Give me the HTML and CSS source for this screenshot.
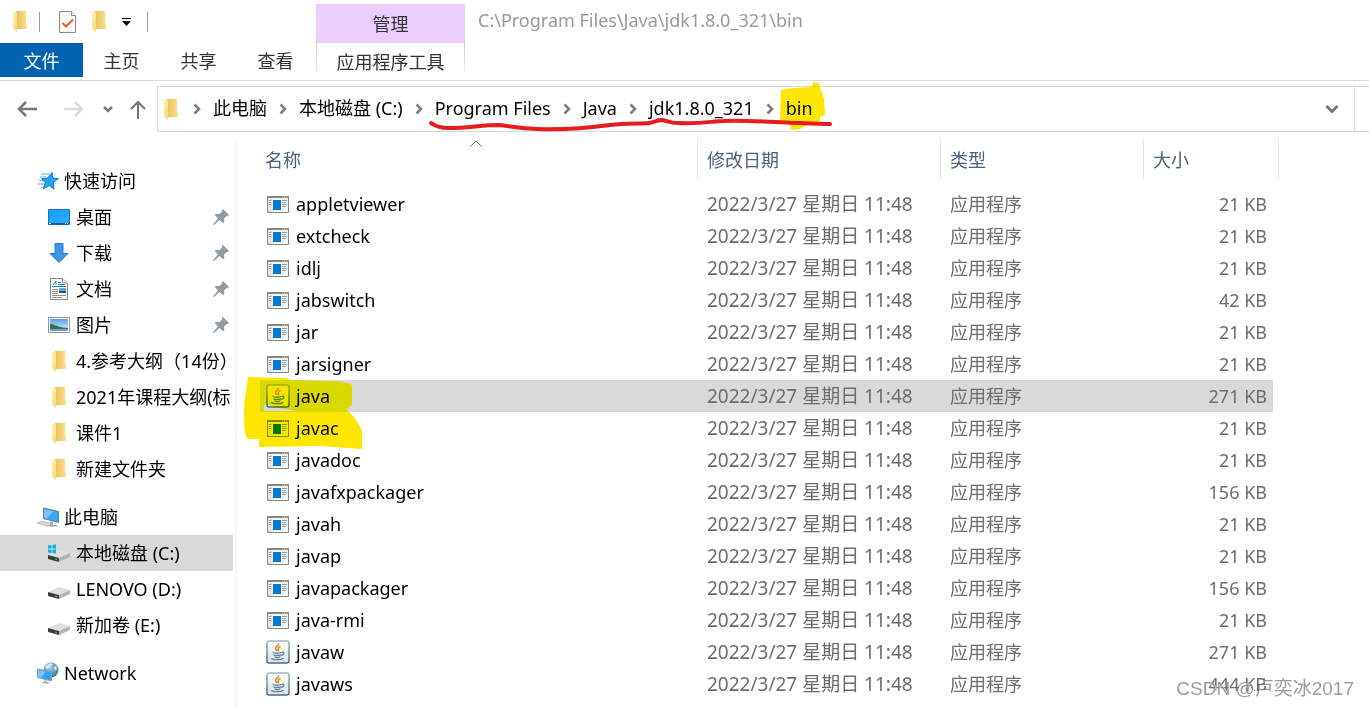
FILE: index.html
```
<!DOCTYPE html>
<html lang="zh-CN">
<head>
    <meta charset="UTF-8">
    <meta name="viewport" content="width=device-width, initial-scale=1.0">
    <title>bin</title>
    <link rel="stylesheet" href="styles.css">
</head>
<body>
    <svg class="sprite" aria-hidden="true">
        <defs>
            <linearGradient id="g-folder" x1="0" y1="0" x2="1" y2="0">
                <stop offset="0" stop-color="#e8bf5c"/>
                <stop offset="1" stop-color="#ffe08a"/>
            </linearGradient>
            <linearGradient id="g-flap" x1="0" y1="0" x2="1" y2="1">
                <stop offset="0" stop-color="#fff0b8"/>
                <stop offset="1" stop-color="#fbd973"/>
            </linearGradient>
            <linearGradient id="g-blue" x1="0" y1="0" x2="1" y2="1">
                <stop offset="0" stop-color="#1b9cf5"/>
                <stop offset="1" stop-color="#27adff"/>
            </linearGradient>
            <linearGradient id="g-java" x1="0" y1="0" x2="0" y2="1">
                <stop offset="0" stop-color="#ffffff"/>
                <stop offset="1" stop-color="#dde0e3"/>
            </linearGradient>
            <linearGradient id="g-frame" x1="0" y1="0" x2="0" y2="1">
                <stop offset="0" stop-color="#9db3c6"/>
                <stop offset="1" stop-color="#4c6a82"/>
            </linearGradient>
            <linearGradient id="g-sky" x1="0" y1="0" x2="0" y2="1">
                <stop offset="0" stop-color="#5aa2e8"/>
                <stop offset="1" stop-color="#e4f2fb"/>
            </linearGradient>
            <radialGradient id="g-globe" cx="0.4" cy="0.3" r="0.8">
                <stop offset="0" stop-color="#a9d5ea"/>
                <stop offset="1" stop-color="#2a6c96"/>
            </radialGradient>
        </defs>
        <symbol id="folder" viewBox="0 0 14 21">
            <path fill="url(#g-folder)" d="M3 0h10v13l1 1v4H4z"/>
            <path fill="url(#g-flap)" d="M0 0l4 2v19l-4-3z"/>
        </symbol>
        <symbol id="check" viewBox="0 0 17 22">
            <path fill="#fafafa" stroke="#8a8a8a" d="M.5.5h12l4 4v17H.5z"/>
            <path fill="#fff" stroke="#8a8a8a" d="M12.500.500v4h4"/>
            <path fill="none" stroke="#f25c1b" stroke-width="2" d="M3.500 12l3.500 3.500 7-7"/>
        </symbol>
        <symbol id="app" viewBox="0 0 22 17">
            <path fill="#f7f7f7" d="M0 0h22v17H0z"/>
            <path fill="#e4e4e4" d="M1 2h4v14H1z"/>
            <path fill="#86898c" d="M0 0h22v17H0zM1 2v14h20V2z" fill-rule="evenodd"/>
            <path fill="#d5d5d5" d="M15 0.500h1v1h-1zM17 .5h1v1h-1zM19 .5h1v1h-1z"/>
            <path fill="#0078d7" d="M6 4h8v10H6z"/>
            <path stroke="#9a9a9a" d="M2 4.500h2M2 6.500h2M2 8.500h2M15 4.500h5M15 6.500h4M15 8.500h5M15 10.500h4"/>
        </symbol>
        <symbol id="java" viewBox="0 0 24 24">
            <rect x="1" y="1" width="22" height="22" rx="2" fill="url(#g-java)" stroke="url(#g-frame)" stroke-width="1.500"/>
            <path fill="none" stroke="#ee7f1c" stroke-width="1.500" d="M12.500 3.500c1 2.200-3.500 3-3 5 .2 1 1.500 1.500 1.500 2.700M14.500 6.500c-2.300.8-2.800 1.800-2 3 .4.700 0 1.300-.5 1.700"/>
            <path fill="none" stroke="#5b83a3" stroke-width="1.300" d="M6.500 12.500c2 1 7 1 9 0M16 12c2.800-.3 2.500 2.800-.8 3.500M7.500 14.700c1.500 1 6 1 7.500 0M8.500 16.700c1.500.8 4.500.8 6 0M5 18.500c2.500 1.600 10 1.600 12.500-.3"/>
        </symbol>
        <symbol id="star" viewBox="0 0 24 20">
            <path stroke="#8fc9f3" stroke-width="1.500" d="M5 3h8M4 6h6M3 9.500h6M2 13h6M5 16h4"/>
            <path fill="#26a1f2" stroke="#1380cf" d="M16 1.500l1 5.500 5.500.7-5 3.500.5 7-4.700-3.600-6 3.400 2-6.300-3.600-4 5.600-.5z"/>
        </symbol>
        <symbol id="desktop" viewBox="0 0 22 16">
            <path fill="url(#g-blue)" stroke="#0f74bd" d="M.5.5h21v15H.5z"/>
            <path fill="#0e5c96" d="M1 14h20v1.500H1z"/>
            <path fill="#fff" d="M1 14h2v1H1zM17 14h1v1h-1zM19 14h1v1h-1z"/>
        </symbol>
        <symbol id="download" viewBox="0 0 20 20">
            <path fill="#3c95e6" stroke="#2a7fcb" d="M6 .5h8v10h5L10 19.500 1 10.500h5z"/>
        </symbol>
        <symbol id="document" viewBox="0 0 18 22">
            <path fill="#fcfcfc" stroke="#8a8a8a" d="M.5.5h12l5 4.500v16.500H.5z"/>
            <path fill="#eee" stroke="#8a8a8a" d="M12.500.5V5h5"/>
            <path fill="none" stroke="#1b8bdc" d="M3 7l3-4v4M8 4.500h3M8 6.500h7M2 8.500h14"/>
            <path stroke="#8f8f8f" d="M2 11.500h6M2 13.500h6M2 15.500h6M2 17.500h14M2 19.500h10"/>
            <path fill="#66a5da" d="M9 10h7v3H9z"/>
            <path fill="#34566d" d="M9 13h7v2H9z"/>
        </symbol>
        <symbol id="picture" viewBox="0 0 22 16">
            <path fill="#fff" stroke="#939393" d="M.5.5h21v15H.5z"/>
            <path fill="url(#g-sky)" d="M2 2h18v12H2z"/>
            <path fill="#3f6d50" d="M2 7c4 0 7 2.500 13 3.500l5 .5v1H2z"/>
            <path fill="#6ba5c4" d="M2 12h18v2H2z"/>
        </symbol>
        <symbol id="pin" viewBox="0 0 16 16">
            <path fill="#909aa2" d="M10 0l6 6-1.500 1.200-1-.2-2.500 2.500.3 3.500-1.300 1.200L6.500 11 1 16l-1-.8L5 9.500 1.800 6 3 4.700l3.500.3L9 2.500 8.800 1.200z"/>
        </symbol>
        <symbol id="pc" viewBox="0 0 24 21">
            <path fill="#34a8f5" stroke="#6b7c88" d="M7.500 1l15 3.500v11l-15-4z"/>
            <path fill="#73c6fb" d="M8 2l9 2.200-6 7.300-3-.8z"/>
            <path fill="#a4adb3" d="M14 14l3 1v3h4v1l-5 1-4-1 2-1.500z"/>
            <path fill="#d2d7da" stroke="#9da5aa" stroke-width=".6" d="M1 16l5-2 10 3-5 2.500z"/>
        </symbol>
        <symbol id="drive" viewBox="0 0 22 12">
            <path fill="#dfdfe2" d="M0 5l11-5 11 3-11 5z"/>
            <path fill="#3c3c3c" d="M0 5l11 3v4L0 9z"/>
            <path fill="#b4b4b7" d="M11 8l11-5v4l-11 5z"/>
            <path fill="#4fc35a" d="M7 8.500l2 .5v1.200l-2-.5z"/>
        </symbol>
        <symbol id="system-drive" viewBox="0 0 22 18">
            <use href="#drive" y="6" width="22" height="12"/>
            <path fill="#00b4ef" d="M0 1.500l3.500-.5v3.500H0zM4.500.9L8 .4v4.100H4.500zM0 5.500h3.500V9L0 8.500zM4.500 5.500H8v4.100l-3.500-.5z"/>
        </symbol>
        <symbol id="network" viewBox="0 0 24 22">
            <circle cx="15" cy="8" r="7.500" fill="url(#g-globe)"/>
            <path fill="#d3ebf4" d="M11 3l4-2 2 1.500-3 2-2 2.500-3-1.500zM18 5l2-1 1 3-2 1.500z"/>
            <path fill="#2da2f2" stroke="#8d9ba5" d="M1.500 7l14 3v9l-14-3.500z"/>
            <path fill="#74c6fa" d="M2 8l8 1.700-5 6-3-.8z"/>
            <path fill="#aab3b9" d="M8 18l3 1v1l3 .5-3 1.500-6-1.500 3-.7z"/>
        </symbol>
        <symbol id="crumb-arrow" viewBox="0 0 8 12">
            <path fill="none" stroke="#7c7c7c" stroke-width="2.500" d="M1.500 1.500L6 6l-4.500 4.500"/>
        </symbol>
    </svg>

    <div class="explorer">
        <header class="titlebar">
            <div class="quick">
                <svg class="i-folder"><use href="#folder"/></svg>
                <span class="divider first"></span>
                <button class="plain" aria-label="属性"><svg class="i-check"><use href="#check"/></svg></button>
                <button class="plain" aria-label="新建文件夹"><svg class="i-folder"><use href="#folder"/></svg></button>
                <button class="plain" aria-label="自定义快速访问工具栏"><svg width="9" height="8"><path d="M0 0h9v1H0zM0 3h9L4.500 8z"/></svg></button>
                <span class="divider"></span>
            </div>
            <div class="context-group">管理</div>
            <div class="window-title">C:\Program Files\Java\jdk1.8.0_321\bin</div>
        </header>

        <nav class="ribbon">
            <button class="tab file">文件</button>
            <button class="tab">主页</button>
            <button class="tab">共享</button>
            <button class="tab">查看</button>
            <button class="tab context">应用程序工具</button>
        </nav>

        <div class="navbar">
            <div class="history">
                <button class="plain" aria-label="后退"><svg width="20" height="16"><path fill="none" stroke="#777" stroke-width="2.500" d="M20 8H2M9 1L2 8l7 7"/></svg></button>
                <button class="plain forward" aria-label="前进"><svg width="20" height="16"><path fill="none" stroke="#dcdcdc" stroke-width="2.500" d="M0 8h18M11 1l7 7-7 7"/></svg></button>
                <button class="plain recent" aria-label="最近浏览的位置"><svg width="10" height="7"><path fill="none" stroke="#777" stroke-width="2.500" d="M1 1l4 4 4-4"/></svg></button>
                <button class="plain up" aria-label="向上"><svg width="16" height="19"><path fill="none" stroke="#777" stroke-width="2" d="M8 19V2M1 9l7-7 7 7"/></svg></button>
            </div>
            <div class="address">
                <svg class="i-folder"><use href="#folder"/></svg>
                <svg class="arrow"><use href="#crumb-arrow"/></svg>
                <a href="#">此电脑</a>
                <svg class="arrow"><use href="#crumb-arrow"/></svg>
                <a href="#">本地磁盘 (C:)</a>
                <svg class="arrow"><use href="#crumb-arrow"/></svg>
                <a href="#">Program Files</a>
                <svg class="arrow"><use href="#crumb-arrow"/></svg>
                <a href="#">Java</a>
                <svg class="arrow"><use href="#crumb-arrow"/></svg>
                <a href="#">jdk1.8.0_321</a>
                <svg class="arrow"><use href="#crumb-arrow"/></svg>
                <a href="#">bin</a>
                <button class="plain expand" aria-label="展开"><svg width="14" height="10"><path fill="none" stroke="#777" stroke-width="3" d="M1.500 2L7 7.500 12.500 2"/></svg></button>
                <span class="refresh"></span>
                <svg class="marker path-marker" width="50" height="50" aria-hidden="true"><path fill="#ffe600" d="M1 39L2 9l12-2 19-1 1-5 6 1 1 5 4 10 1 17-5 2v4l-13 4-7 4-9 1v-4z"/></svg>
                <svg class="underline" width="410" height="20" aria-hidden="true"><path fill="none" stroke="#e81c1c" stroke-width="4" stroke-linecap="round" stroke-linejoin="round" d="M4 7c3 2 6 5 17 5 20 0 34-3 51-3 12 1 19 4 39 4 30 1 50-1 72-4 16-2 30-1 39-2 6-1 8-3 13-3 6 1 8 3 16 3 26 1 34-2 46-2 30-1 55 2 106 3"/></svg>
            </div>
        </div>

        <div class="content">
            <nav class="sidebar">
                <ul class="tree">
                    <li><a href="#" class="root"><svg width="24" height="20"><use href="#star"/></svg>快速访问</a></li>
                    <li><a href="#"><span class="icon"><svg width="22" height="16"><use href="#desktop"/></svg></span>桌面<svg class="pin"><use href="#pin"/></svg></a></li>
                    <li><a href="#"><span class="icon"><svg width="20" height="20"><use href="#download"/></svg></span>下载<svg class="pin"><use href="#pin"/></svg></a></li>
                    <li><a href="#"><span class="icon"><svg width="18" height="22"><use href="#document"/></svg></span>文档<svg class="pin"><use href="#pin"/></svg></a></li>
                    <li><a href="#"><span class="icon"><svg width="22" height="16"><use href="#picture"/></svg></span>图片<svg class="pin"><use href="#pin"/></svg></a></li>
                    <li><a href="#"><span class="icon"><svg class="i-folder"><use href="#folder"/></svg></span>4.参考大纲（14份）</a></li>
                    <li><a href="#"><span class="icon"><svg class="i-folder"><use href="#folder"/></svg></span>2021年课程大纲(标</a></li>
                    <li><a href="#"><span class="icon"><svg class="i-folder"><use href="#folder"/></svg></span>课件1</a></li>
                    <li><a href="#"><span class="icon"><svg class="i-folder"><use href="#folder"/></svg></span>新建文件夹</a></li>
                </ul>
                <ul class="tree">
                    <li><a href="#" class="root"><svg width="24" height="21"><use href="#pc"/></svg>此电脑</a></li>
                    <li><a href="#" class="current"><span class="icon"><svg width="22" height="18"><use href="#system-drive"/></svg></span>本地磁盘 (C:)</a></li>
                    <li><a href="#"><span class="icon low"><svg width="22" height="12"><use href="#drive"/></svg></span>LENOVO (D:)</a></li>
                    <li><a href="#"><span class="icon low"><svg width="22" height="12"><use href="#drive"/></svg></span>新加卷 (E:)</a></li>
                </ul>
                <ul class="tree">
                    <li><a href="#" class="root"><svg width="24" height="22"><use href="#network"/></svg>Network</a></li>
                </ul>
            </nav>

            <main class="files">
                <table>
                    <colgroup>
                        <col class="col-name">
                        <col class="col-date">
                        <col class="col-type">
                        <col class="col-size">
                    </colgroup>
                    <thead>
                        <tr>
                            <th>名称<svg class="sort" width="12" height="7"><path fill="none" stroke="#666" d="M.5 6.500L6 1l5.500 5.500"/></svg></th>
                            <th>修改日期</th>
                            <th>类型</th>
                            <th>大小</th>
                        </tr>
                    </thead>
                    <tbody>
                        <tr><td><svg class="i-app"><use href="#app"/></svg>appletviewer</td><td>2022/3/27 星期日 11:48</td><td>应用程序</td><td>21 KB</td></tr>
                        <tr><td><svg class="i-app"><use href="#app"/></svg>extcheck</td><td>2022/3/27 星期日 11:48</td><td>应用程序</td><td>21 KB</td></tr>
                        <tr><td><svg class="i-app"><use href="#app"/></svg>idlj</td><td>2022/3/27 星期日 11:48</td><td>应用程序</td><td>21 KB</td></tr>
                        <tr><td><svg class="i-app"><use href="#app"/></svg>jabswitch</td><td>2022/3/27 星期日 11:48</td><td>应用程序</td><td>42 KB</td></tr>
                        <tr><td><svg class="i-app"><use href="#app"/></svg>jar</td><td>2022/3/27 星期日 11:48</td><td>应用程序</td><td>21 KB</td></tr>
                        <tr><td><svg class="i-app"><use href="#app"/></svg>jarsigner</td><td>2022/3/27 星期日 11:48</td><td>应用程序</td><td>21 KB</td></tr>
                        <tr class="selected"><td><svg class="i-java"><use href="#java"/></svg>java</td><td>2022/3/27 星期日 11:48</td><td>应用程序</td><td>271 KB</td></tr>
                        <tr><td><svg class="i-app"><use href="#app"/></svg>javac</td><td>2022/3/27 星期日 11:48</td><td>应用程序</td><td>21 KB</td></tr>
                        <tr><td><svg class="i-app"><use href="#app"/></svg>javadoc</td><td>2022/3/27 星期日 11:48</td><td>应用程序</td><td>21 KB</td></tr>
                        <tr><td><svg class="i-app"><use href="#app"/></svg>javafxpackager</td><td>2022/3/27 星期日 11:48</td><td>应用程序</td><td>156 KB</td></tr>
                        <tr><td><svg class="i-app"><use href="#app"/></svg>javah</td><td>2022/3/27 星期日 11:48</td><td>应用程序</td><td>21 KB</td></tr>
                        <tr><td><svg class="i-app"><use href="#app"/></svg>javap</td><td>2022/3/27 星期日 11:48</td><td>应用程序</td><td>21 KB</td></tr>
                        <tr><td><svg class="i-app"><use href="#app"/></svg>javapackager</td><td>2022/3/27 星期日 11:48</td><td>应用程序</td><td>156 KB</td></tr>
                        <tr><td><svg class="i-app"><use href="#app"/></svg>java-rmi</td><td>2022/3/27 星期日 11:48</td><td>应用程序</td><td>21 KB</td></tr>
                        <tr><td><svg class="i-java"><use href="#java"/></svg>javaw</td><td>2022/3/27 星期日 11:48</td><td>应用程序</td><td>271 KB</td></tr>
                        <tr><td><svg class="i-java"><use href="#java"/></svg>javaws</td><td>2022/3/27 星期日 11:48</td><td>应用程序</td><td>444 KB</td></tr>
                    </tbody>
                </table>
                <svg class="marker file-marker" width="120" height="76" aria-hidden="true"><path fill="#ffe600" fill-rule="evenodd" d="M5 1l38 1 5 2 40 1c10 0 17 2 21 4v20l-6 4c7 6 13 14 16 22v18l-43-3-60 1v-8H5c-4-3-4-18-4-27 0-14 3-24 4-35zM21 28v7h33c-12-2-23-4-33-7z"/></svg>
            </main>
        </div>
        <div class="watermark">CSDN @卢奕冰2017</div>
    </div>
</body>
</html>
```

FILE: styles.css
```
* {
    box-sizing: border-box;
}

body {
    margin: 0;
    background: #fff;
    color: #000;
    font-family: "Noto Sans", "Noto Sans CJK SC", sans-serif;
    font-size: 18px;
    line-height: 24px;
}

a {
    color: inherit;
    text-decoration: none;
}

svg {
    display: block;
    flex-shrink: 0;
}

.sprite {
    position: absolute;
    width: 0;
    height: 0;
}

.plain {
    display: block;
    padding: 0;
    border: 0;
    background: none;
}

.explorer {
    position: relative;
    display: flex;
    flex-direction: column;
    height: 100vh;
    overflow: hidden;
}

.i-folder {
    width: 14px;
    height: 21px;
}

.i-check {
    width: 17px;
    height: 22px;
}

/* title bar */
.titlebar {
    display: flex;
    height: 43px;
}

.quick {
    display: flex;
    align-items: center;
    gap: 16px;
    width: 316px;
    padding-left: 13px;
}

.divider {
    width: 1px;
    height: 20px;
    background: #999;
}

.divider.first {
    margin: 0 3px 0 -4px;
}

.context-group {
    width: 149px;
    margin-top: 4px;
    background: #eaccfd;
    color: #333;
    line-height: 40px;
    height: 39px;
    text-align: center;
}

.window-title {
    margin-left: 13px;
    color: #999;
    line-height: 40px;
}

/* ribbon */
.ribbon {
    display: flex;
    height: 38px;
    border-bottom: 1px solid #dadada;
}

.tab {
    width: 77px;
    height: 34px;
    padding: 2px 0 0;
    border: 0;
    background: none;
    color: #333;
    font: inherit;
}

.tab.file {
    width: 83px;
    background: #0063b1;
    color: #fff;
}

.tab.context {
    width: 149px;
    height: 29px;
    margin-left: 2px;
    padding-top: 7px;
    border: solid;
    border-width: 0 1px;
    border-image: linear-gradient(#c8c8c8, #eee) 1;
}

/* navigation row */
.navbar {
    display: flex;
    padding: 5px 0 7px;
}

.history {
    display: flex;
    align-items: center;
    width: 157px;
    padding-left: 17px;
}

.forward {
    margin-left: 27px;
}

.recent {
    margin-left: 19px;
}

.up {
    margin-left: 17px;
}

.address {
    position: relative;
    display: flex;
    flex: 1;
    align-items: center;
    height: 46px;
    padding-left: 6px;
    border: 1px solid #d9d9d9;
    border-right: 0;
}

.address a {
    padding-bottom: 2px;
    white-space: nowrap;
}

.arrow {
    width: 8px;
    height: 12px;
    margin: 0 12px;
}

.address .i-folder + .arrow {
    margin-left: 15px;
}

.expand {
    margin: 0 15px 0 auto;
}

.refresh {
    width: 15px;
    height: 44px;
    border-left: 1px solid #d9d9d9;
}

/* pen and highlighter strokes */
.marker,
.underline {
    position: absolute;
    pointer-events: none;
}

.marker {
    mix-blend-mode: darken;
}

.path-marker {
    left: 621px;
    top: -6px;
}

.underline {
    left: 269px;
    top: 29px;
}

.file-marker {
    left: 6px;
    top: 237px;
}

/* sidebar */
.content {
    display: flex;
    flex: 1;
    min-height: 0;
}

.sidebar {
    width: 237px;
    padding: 24px 2px 0 0;
    border-right: 2px solid #f5f5f5;
}

.tree {
    margin: 0 0 12px;
    padding: 0;
    list-style: none;
}

.tree a {
    display: flex;
    align-items: center;
    gap: 6px;
    height: 36px;
    padding-left: 48px;
    white-space: nowrap;
}

.tree a.root {
    gap: 4px;
    padding-left: 36px;
}

.tree a.current {
    background: #d9d9d9;
}

.icon {
    display: flex;
    flex: none;
    justify-content: center;
    width: 22px;
}

.icon.low {
    padding-top: 8px;
}

.pin {
    width: 16px;
    height: 16px;
    margin: 0 4px 0 auto;
}

/* file list */
.files {
    position: relative;
    flex: 1;
    min-width: 0;
    padding-left: 23px;
}

table {
    width: 1019px;
    table-layout: fixed;
    border-spacing: 0;
}

.col-name {
    width: 438px;
}

.col-date {
    width: 243px;
}

.col-type {
    width: 203px;
}

.col-size {
    width: 135px;
}

th {
    position: relative;
    height: 41px;
    padding: 0 9px;
    border-right: 1px solid #e5e5e5;
    color: #4c607a;
    font-weight: 400;
    text-align: left;
}

th:first-child {
    padding-left: 5px;
}

.sort {
    position: absolute;
    left: 48%;
    top: 1px;
}

tbody::before {
    content: "";
    display: block;
    height: 8px;
}

td {
    height: 32px;
    padding: 0 9px;
    color: #6d6d6d;
    white-space: nowrap;
}

td:first-child {
    display: flex;
    align-items: center;
    gap: 6px;
    padding-left: 6px;
    color: #000;
}

td:nth-child(2) {
    font-size: 19px;
}

td:last-child {
    padding-right: 6px;
    border-right: 6px solid #fff;
    text-align: right;
}

.selected td {
    background: #d9d9d9;
}

.i-app {
    width: 22px;
    height: 17px;
    margin: 0 1px;
}

.i-java {
    width: 24px;
    height: 24px;
}

.watermark {
    position: absolute;
    right: 15px;
    bottom: 7px;
    color: rgba(90, 90, 90, 0.6);
    font-family: "Liberation Sans", "Noto Sans CJK SC", sans-serif;
    font-size: 19px;
    text-shadow: 1px 1px 1px #fff;
}
```
